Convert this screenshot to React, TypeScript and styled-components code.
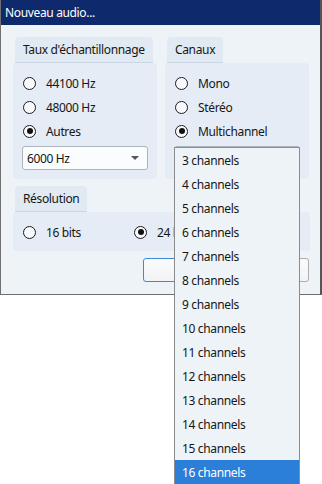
import React from "react";
import styled, { createGlobalStyle } from "styled-components";

const colors = {
  title: "#0f2a6c",
  body: "#eef3f8",
  panel: "#e5ecf5",
  tab: "#e1e9f3",
  tabLine: "#c9d5e3",
  text: "#161616",
  frame: "#6f6f6f",
  listBorder: "#8c8c8c",
  highlight: "#2b7fd8",
};

const GlobalStyle = createGlobalStyle`
  body {
    margin: 0;
    background: #ffffff;
    font-family: "Segoe UI", "Noto Sans", sans-serif;
    font-size: 12px;
    letter-spacing: -0.35px;
    color: ${colors.text};
  }
`;

const Page = styled.div`
  position: relative;
  width: 322px;
  height: 484px;
  overflow: hidden;
`;

const Window = styled.div`
  width: 322px;
  height: 295px;
  box-sizing: border-box;
  background: ${colors.body};
  border-left: 1px solid ${colors.frame};
  border-right: 2px solid #555;
  border-bottom: 1px solid ${colors.frame};
  display: flex;
  flex-direction: column;
`;

const TitleBar = styled.div`
  height: 25px;
  flex: none;
  display: flex;
  align-items: center;
  padding-left: 4px;
  background: ${colors.title};
  color: #ffffff;
`;

const Body = styled.div`
  padding: 12px 10px 0 12px;
  display: flex;
  flex-direction: column;
`;

const Row = styled.div`
  display: flex;
  gap: 8px;
`;

const Group = styled.div<{ $width?: number }>`
  width: ${(p) => (p.$width ? `${p.$width}px` : "100%")};
  display: flex;
  flex-direction: column;
`;

const Tab = styled.div`
  align-self: flex-start;
  margin-left: 2px;
  height: 25px;
  padding: 0 8px;
  display: flex;
  align-items: center;
  white-space: nowrap;
  background: ${colors.tab};
  border-radius: 4px 4px 0 0;
  border-bottom: 1px solid ${colors.tabLine};
`;

const Panel = styled.div`
  background: ${colors.panel};
  border-radius: 4px;
  padding: 8px 9px 9px 9px;
  display: flex;
  flex-direction: column;
`;

const InlinePanel = styled(Panel)`
  flex-direction: row;
  padding: 8px 9px 7px 9px;
`;

const Option = styled.label<{ $width?: number }>`
  height: 24px;
  display: flex;
  align-items: center;
  gap: 10px;
  padding-left: 1px;
  white-space: nowrap;
  width: ${(p) => (p.$width ? `${p.$width}px` : "auto")};
`;

const Circle = styled.span<{ $checked?: boolean }>`
  flex: none;
  width: 13px;
  height: 13px;
  box-sizing: border-box;
  border: 1.5px solid #1b1b1b;
  border-radius: 50%;
  display: flex;
  align-items: center;
  justify-content: center;
  background: #f7f9fc;

  &::after {
    content: "";
    display: ${(p) => (p.$checked ? "block" : "none")};
    width: 6px;
    height: 6px;
    border-radius: 50%;
    background: #111;
  }
`;

const Combo = styled.div`
  margin-top: 3px;
  width: 126px;
  height: 24px;
  box-sizing: border-box;
  border: 1px solid #adb3ba;
  border-radius: 3px;
  background: #fbfcfe;
  display: flex;
  align-items: center;
  justify-content: space-between;
  padding: 0 8px 0 4px;
`;

const Arrow = styled.span`
  margin-left: auto;
  width: 0;
  height: 0;
  border-left: 4px solid transparent;
  border-right: 4px solid transparent;
  border-top: 4px solid #555;
`;

const ButtonRow = styled.div`
  margin-top: 7px;
  display: flex;
  justify-content: flex-end;
  gap: 6px;
  padding-right: 1px;
`;

const Button = styled.button<{ $primary?: boolean }>`
  width: 80px;
  height: 24px;
  font: inherit;
  letter-spacing: inherit;
  color: ${colors.text};
  border: 1px solid ${(p) => (p.$primary ? "#3b8ae0" : "#adadad")};
  border-radius: 3px;
  background: linear-gradient(#fbfbfc, #f1f3f6);
`;

const Popup = styled.ul`
  position: absolute;
  left: 174px;
  top: 147px;
  width: 126px;
  margin: 0;
  padding: 0;
  list-style: none;
  box-sizing: border-box;
  border: 1px solid ${colors.listBorder};
  background: ${colors.body};
  z-index: 2;
`;

const Item = styled.li<{ $active?: boolean }>`
  height: 24px;
  display: flex;
  align-items: center;
  padding-left: 7px;
  white-space: nowrap;
  background: ${(p) => (p.$active ? colors.highlight : "transparent")};
  color: ${(p) => (p.$active ? "#ffffff" : colors.text)};
`;

const channels = Array.from({ length: 14 }, (_, i) => i + 3);

export default function App() {
  return (
    <Page>
      <GlobalStyle />
      <Window>
        <TitleBar>Nouveau audio...</TitleBar>
        <Body>
          <Row>
            <Group $width={144}>
              <Tab>Taux d'échantillonnage</Tab>
              <Panel>
                <Option>
                  <Circle />
                  44100 Hz
                </Option>
                <Option>
                  <Circle />
                  48000 Hz
                </Option>
                <Option>
                  <Circle $checked />
                  Autres
                </Option>
                <Combo>
                  6000 Hz
                  <Arrow />
                </Combo>
              </Panel>
            </Group>
            <Group $width={144}>
              <Tab>Canaux</Tab>
              <Panel>
                <Option>
                  <Circle />
                  Mono
                </Option>
                <Option>
                  <Circle />
                  Stéréo
                </Option>
                <Option>
                  <Circle $checked />
                  Multichannel
                </Option>
                {/* combo sits under the open popup list */}
                <Combo>
                  <Arrow />
                </Combo>
              </Panel>
            </Group>
          </Row>
          <Group style={{ marginTop: 7 }}>
            <Tab>Résolution</Tab>
            <InlinePanel>
              <Option $width={110}>
                <Circle />
                16 bits
              </Option>
              <Option>
                <Circle $checked />
                24 bits
              </Option>
            </InlinePanel>
          </Group>
          <ButtonRow>
            <Button $primary />
            <Button />
          </ButtonRow>
        </Body>
      </Window>
      <Popup>
        {channels.map((n) => (
          <Item key={n} $active={n === 16}>
            {n} channels
          </Item>
        ))}
      </Popup>
    </Page>
  );
}
